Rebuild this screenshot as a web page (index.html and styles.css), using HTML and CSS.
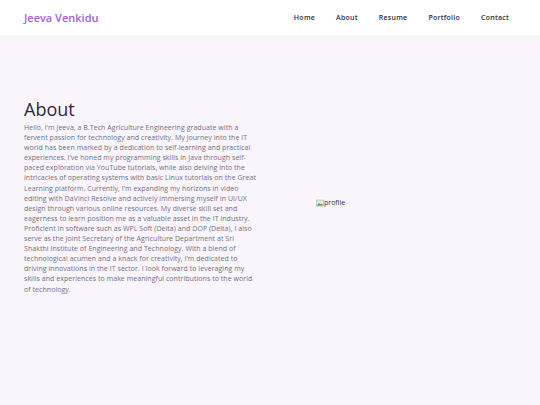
FILE: index.html
```html
<!DOCTYPE html>
<html lang="en">
<head>
  <meta charset="UTF-8">
  <meta name="viewport" content="width=device-width, initial-scale=1.0">
  <title>Jeeva Venkidu</title>
  <link rel="stylesheet" href="styles.css">
</head>
<body>
  <!-- Top navigation -->
  <header class="site-header">
    <a href="#" class="logo">Jeeva Venkidu</a>
    <nav class="nav">
      <a href="#" class="nav-link">Home</a>
      <a href="#about" class="nav-link">About</a>
      <a href="#" class="nav-link">Resume</a>
      <a href="#" class="nav-link">Portfolio</a>
      <a href="#" class="nav-link">Contact</a>
    </nav>
  </header>

  <!-- About section -->
  <main class="about" id="about">
    <div class="about-text">
      <h1 class="about-title">About</h1>
      <p class="about-body">Hello, I’m Jeeva, a B.Tech Agriculture Engineering graduate with a fervent passion for technology and creativity. My journey into the IT world has been marked by a dedication to self-learning and practical experiences. I’ve honed my programming skills in Java through self-paced exploration via YouTube tutorials, while also delving into the intricacies of operating systems with basic Linux tutorials on the Great Learning platform. Currently, I’m expanding my horizons in video editing with DaVinci Resolve and actively immersing myself in UI/UX design through various online resources. My diverse skill set and eagerness to learn position me as a valuable asset in the IT industry. Proficient in software such as WPL Soft (Delta) and DOP (Delta), I also serve as the Joint Secretary of the Agriculture Department at Sri Shakthi Institute of Engineering and Technology. With a blend of technological acumen and a knack for creativity, I’m dedicated to driving innovations in the IT sector. I look forward to leveraging my skills and experiences to make meaningful contributions to the world of technology.</p>
    </div>
    <div class="about-photo">
      <span class="broken-img">
        <svg width="8" height="8" viewBox="0 0 16 16" aria-hidden="true">
          <rect x="1" y="2" width="14" height="12" fill="#e8e8e8" stroke="#999" stroke-width="1"/>
          <path d="M2 13 L6 8 L9 11 L11 9 L14 13 Z" fill="#3a9b3a"/>
        </svg>profile
      </span>
    </div>
  </main>
</body>
</html>
```

FILE: styles.css
```css
:root {
  --accent: #a35fdd;
  --bg: #faf5fd;
  --text-dark: #2b2b3b;
  --text-muted: #72707e;
}

body {
  margin: 0;
  font-family: "Open Sans", "Liberation Sans", sans-serif;
  background: var(--bg);
  min-height: 100vh;
}

a {
  text-decoration: none;
}

/* Header */
.site-header {
  height: 35px;
  background: white;
  display: flex;
  align-items: center;
  justify-content: space-between;
  padding: 0 31px 0 24px;
}

.logo {
  color: var(--accent);
  font-size: 11px;
  font-weight: 600;
}

.nav {
  display: flex;
  gap: 21px;
}

.nav-link {
  color: var(--text-dark);
  font-size: 7px;
  font-weight: 600;
  letter-spacing: 0.25px;
}

/* About */
.about {
  display: flex;
  align-items: center;
  padding: 62px 24px 0;
}

.about-text {
  width: 235px;
}

.about-title {
  margin: 0 0 2px;
  font-size: 18px;
  font-weight: 400;
  color: var(--text-dark);
}

.about-body {
  margin: 0;
  font-size: 7px;
  line-height: 10.1px;
  letter-spacing: 0.05px;
  color: var(--text-muted);
}

.about-photo {
  padding: 10px 0 0 57px;
}

.broken-img {
  display: inline-flex;
  align-items: center;
  font-size: 7px;
  color: #333;
}
```
